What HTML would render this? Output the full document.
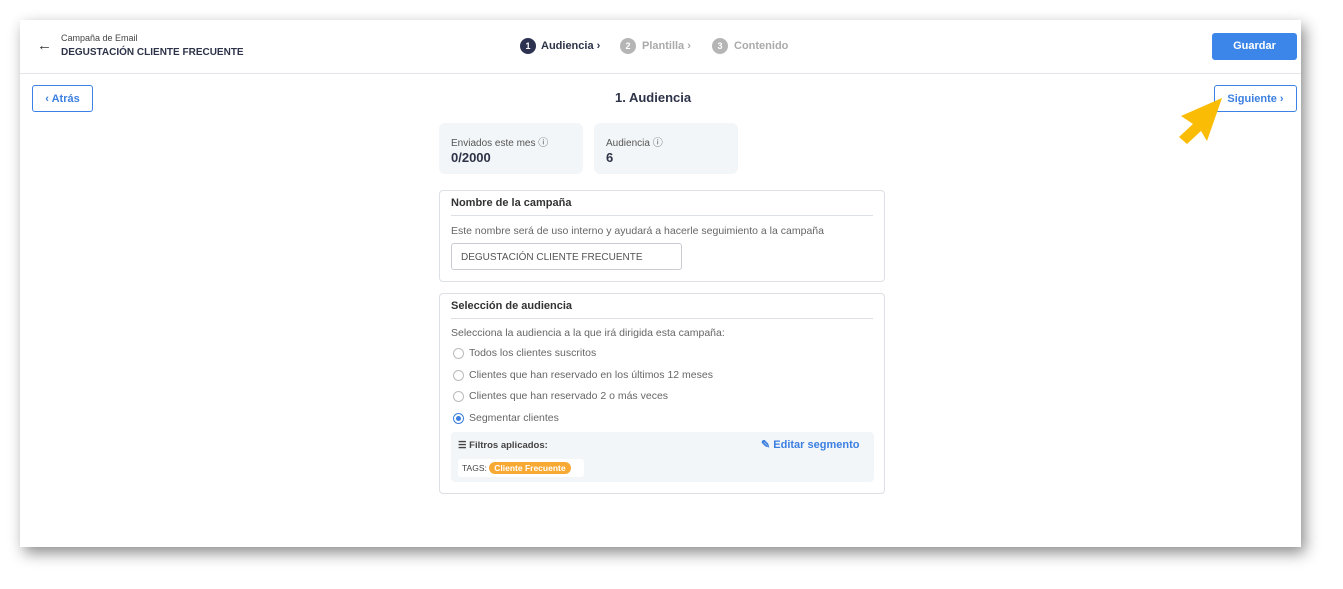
<!DOCTYPE html>
<html><head><meta charset="utf-8"><style>
*{box-sizing:border-box;margin:0;padding:0}
body{width:1343px;height:589px;background:#fff;font-family:"Liberation Sans",sans-serif;position:relative;overflow:hidden;color:#2d3348}
.card{position:absolute;left:20px;top:20px;width:1281px;height:527px;background:#fff;box-shadow:4px 6px 14px rgba(0,0,0,.45)}
.hdr{position:absolute;left:0;top:0;width:1281px;height:54px;border-bottom:1px solid #e3e5ea}
.abs{position:absolute;white-space:nowrap}
.btno{position:absolute;border:1.5px solid #3b82e6;border-radius:3px;color:#3b7fe0;font-weight:bold;font-size:11px;display:flex;align-items:center;justify-content:center;background:#fff}
.stat{position:absolute;background:#f3f6f8;border-radius:6px;width:144px;height:51px}
.stat .l{position:absolute;left:12px;top:11px;font-size:10px;color:#555}
.stat .v{position:absolute;left:12px;top:27px;font-size:13px;font-weight:bold;color:#2d3348}
.box{position:absolute;left:419px;width:446px;border:1px solid #dcdfe4;border-radius:4px}
.box h4{position:absolute;left:11px;top:6px;font-size:11px;font-weight:bold;color:#333}
.box .line{position:absolute;left:11px;right:11px;top:24px;border-top:1px solid #dcdfe4}
.t{font-size:10.5px;color:#666;position:absolute;left:11px;white-space:nowrap}
.r{position:absolute;left:13px;width:11px;height:11px;border:1px solid #bbb;border-radius:50%}
</style></head><body>
<div class="card">
 <div class="hdr">
  <div class="abs" style="left:17px;top:17px;font-size:15px;color:#333">←</div>
  <div class="abs" style="left:41px;top:13px;font-size:9px;color:#444">Campaña de Email</div>
  <div class="abs" style="left:41px;top:27px;font-size:10px;font-weight:bold;color:#2d3348">DEGUSTACIÓN CLIENTE FRECUENTE</div>
  <div class="abs" style="left:500px;top:18px;width:16px;height:16px;border-radius:50%;background:#2d3250;color:#fff;font-size:9px;font-weight:bold;text-align:center;line-height:16px">1</div>
  <div class="abs" style="left:521px;top:20px;font-size:11px;font-weight:bold;color:#2d3348">Audiencia ›</div>
  <div class="abs" style="left:600px;top:18px;width:16px;height:16px;border-radius:50%;background:#b5b5b5;color:#fff;font-size:9px;font-weight:bold;text-align:center;line-height:16px">2</div>
  <div class="abs" style="left:622px;top:20px;font-size:11px;font-weight:bold;color:#aaa">Plantilla ›</div>
  <div class="abs" style="left:692px;top:18px;width:16px;height:16px;border-radius:50%;background:#b5b5b5;color:#fff;font-size:9px;font-weight:bold;text-align:center;line-height:16px">3</div>
  <div class="abs" style="left:714px;top:20px;font-size:11px;font-weight:bold;color:#aaa">Contenido</div>
  <div class="abs" style="left:1192px;top:13px;width:85px;height:27px;background:#3b86e8;border-radius:3px;color:#fff;font-size:11px;font-weight:bold;text-align:center;line-height:27px">Guardar</div>
 </div>
 <div class="btno" style="left:12px;top:65px;width:61px;height:27px">‹ Atrás</div>
 <div class="btno" style="left:1194px;top:65px;width:83px;height:27px">Siguiente ›</div>
 <div class="abs" style="left:595px;top:70px;font-size:13px;font-weight:bold;color:#2d3348">1. Audiencia</div>
 <div class="stat" style="left:419px;top:103px"><div class="l">Enviados este mes ⓘ</div><div class="v">0/2000</div></div>
 <div class="stat" style="left:574px;top:103px"><div class="l">Audiencia ⓘ</div><div class="v">6</div></div>
 <div class="box" style="top:170px;height:92px">
  <h4>Nombre de la campaña</h4><div class="line"></div>
  <div class="t" style="top:34px">Este nombre será de uso interno y ayudará a hacerle seguimiento a la campaña</div>
  <div class="abs" style="left:11px;top:52px;width:231px;height:27px;border:1px solid #c8ccd2;border-radius:3px;font-size:10px;color:#555;padding:8px 9px">DEGUSTACIÓN CLIENTE FRECUENTE</div>
 </div>
 <div class="box" style="top:273px;height:201px">
  <h4>Selección de audiencia</h4><div class="line"></div>
  <div class="t" style="top:33px">Selecciona la audiencia a la que irá dirigida esta campaña:</div>
  <div class="r" style="top:54px"></div><div class="t" style="left:29px;top:53px">Todos los clientes suscritos</div>
  <div class="r" style="top:76px"></div><div class="t" style="left:29px;top:75px">Clientes que han reservado en los últimos 12 meses</div>
  <div class="r" style="top:97px"></div><div class="t" style="left:29px;top:96px">Clientes que han reservado 2 o más veces</div>
  <div class="r" style="top:119px;border-color:#3b7fe0"><div style="position:absolute;left:2px;top:2px;width:5px;height:5px;border-radius:50%;background:#3b7fe0"></div></div><div class="t" style="left:29px;top:118px">Segmentar clientes</div>
  <div class="abs" style="left:11px;top:138px;width:423px;height:50px;background:#f3f6f9;border-radius:4px">
   <div class="abs" style="left:7px;top:8px;font-size:9.5px;font-weight:bold;color:#444">☰ Filtros aplicados:</div>
   <div class="abs" style="left:310px;top:6px;font-size:11px;font-weight:bold;color:#3b7fe0">✎ Editar segmento</div>
   <div class="abs" style="left:7px;top:27px;width:126px;height:18px;background:#fff;border-radius:3px;font-size:8.5px;color:#444;padding:4px 4px">TAGS: <span style="background:#f7a934;color:#fff;font-weight:bold;border-radius:8px;padding:1px 5px">Cliente Frecuente</span></div>
  </div>
 </div>
</div>
<svg class="abs" style="left:1176px;top:94px" width="52" height="52" viewBox="0 0 52 52"><polygon points="46,4 31,47 25,37 11,50 3,43 17,30 5,22" fill="#fbbc05"/></svg>
</body></html>
